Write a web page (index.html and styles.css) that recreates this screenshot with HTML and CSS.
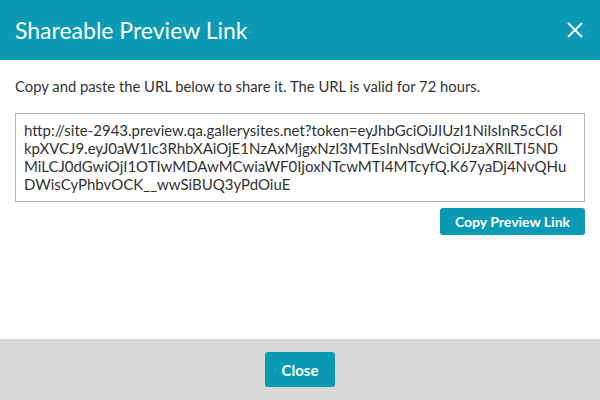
FILE: index.html
```html
<!DOCTYPE html>
<html>
<head>
<meta charset="utf-8">
<link rel="stylesheet" href="styles.css">
</head>
<body>
<div class="modal">
  <header class="modal-header">
    <h1 class="modal-title">Shareable Preview Link</h1>
    <button class="close-x" aria-label="Close">
      <svg width="16" height="16" viewBox="0 0 16 16"><path d="M1 1L15 15M15 1L1 15" stroke="#fff" stroke-width="1.8" fill="none"/></svg>
    </button>
  </header>
  <main class="modal-body">
    <p class="intro">Copy and paste the URL below to share it. The URL is valid for 72 hours.</p>
    <div class="url-box"><span class="url-line">http://site-2943.preview.qa.gallerysites.net?token=eyJhbGciOiJIUzI1NiIsInR5cCI6I</span><span class="url-line">kpXVCJ9.eyJ0aW1lc3RhbXAiOjE1NzAxMjgxNzI3MTEsInNsdWciOiJzaXRlLTI5ND</span><span class="url-line">MiLCJ0dGwiOjI1OTIwMDAwMCwiaWF0IjoxNTcwMTI4MTcyfQ.K67yaDj4NvQHu</span><span class="url-line">DWisCyPhbvOCK__wwSiBUQ3yPdOiuE</span></div>
    <div class="actions">
      <button class="btn btn-copy">Copy Preview Link</button>
    </div>
  </main>
  <footer class="modal-footer">
    <button class="btn btn-close">Close</button>
  </footer>
</div>
</body>
</html>
```
FILE: styles.css
```css
* { box-sizing: border-box; }
html, body { margin: 0; padding: 0; }
body {
  font-family: Lato, "Open Sans", sans-serif;
  color: #333;
  background: #fff;
}
.modal {
  width: 600px;
  height: 400px;
  display: flex;
  flex-direction: column;
}
.modal-header {
  height: 60px;
  background: #0a9ab3;
  display: flex;
  align-items: center;
  justify-content: space-between;
  padding: 0 17px 0 15px;
}
.modal-title {
  margin: 0;
  font-size: 23px;
  font-weight: 400;
  color: #fff;
  line-height: 1;
}
.close-x {
  background: none;
  border: 0;
  padding: 0;
  width: 16px;
  height: 16px;
  display: flex;
  cursor: pointer;
}
.modal-body {
  flex: 1;
  padding: 0 15px;
}
.intro {
  margin: 16px 0 0;
  font-size: 14.8px;
  line-height: 20px;
}
.url-box {
  margin-top: 17px;
  height: 89px;
  border: 1px solid #b5b5b5;
  padding: 7px 8px;
  font-size: 15px;
  line-height: 18px;
  white-space: nowrap;
  overflow: hidden;
}
.url-line { display: block; }
.actions {
  display: flex;
  justify-content: flex-end;
  margin-top: 6px;
}
.btn {
  font-family: Lato, "Open Sans", sans-serif;
  background: #0a9ab3;
  color: #fff;
  border: 0;
  border-radius: 3px;
  font-weight: 700;
  cursor: pointer;
}
.btn-copy {
  width: 145px;
  height: 27px;
  font-size: 14px;
  padding: 0;
}
.modal-footer {
  height: 61px;
  background: #d8d8d8;
  display: flex;
  justify-content: center;
  align-items: center;
}
.btn-close {
  width: 70px;
  height: 35px;
  font-size: 15px;
  padding: 0;
}
```
